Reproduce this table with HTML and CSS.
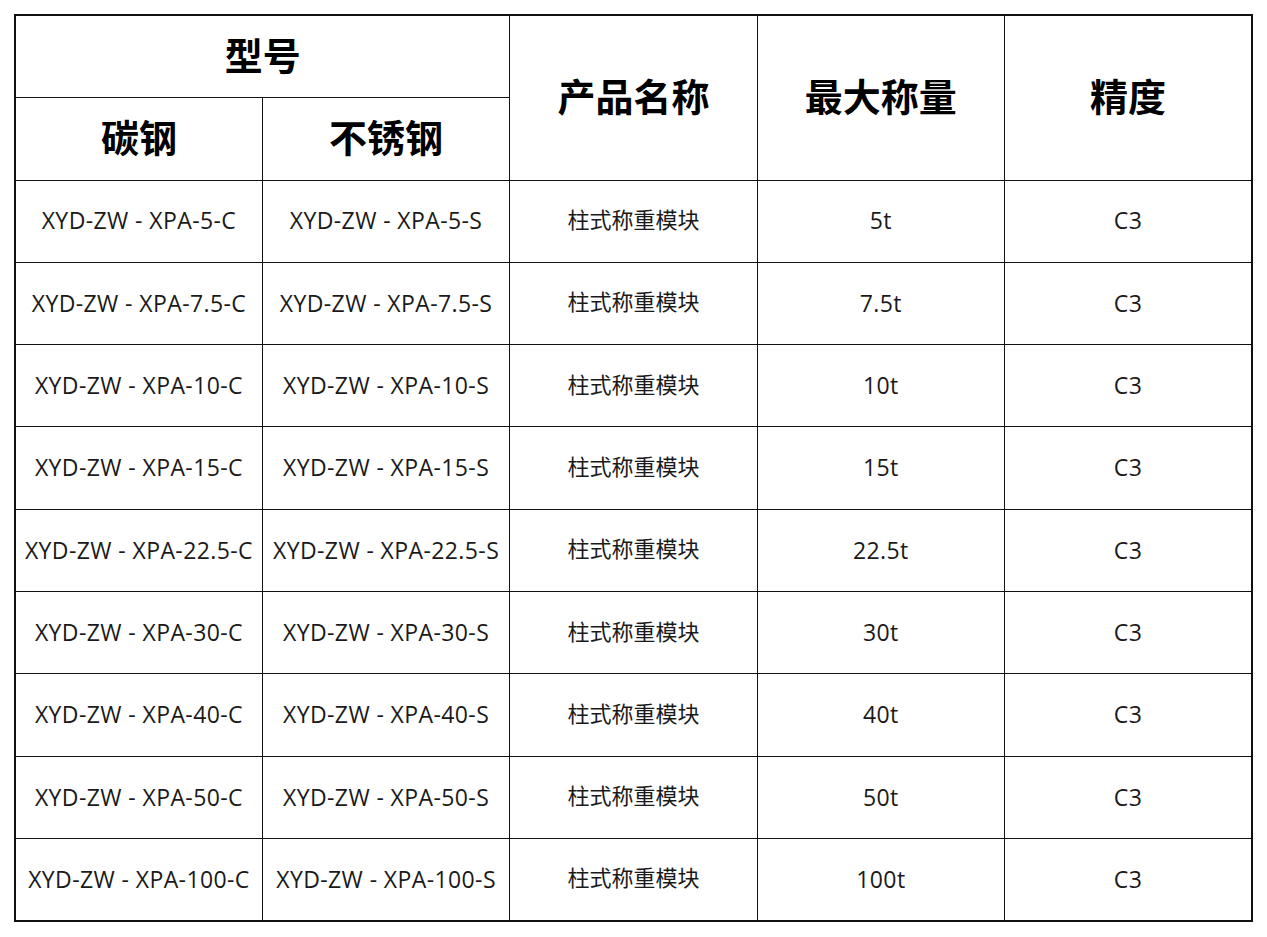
FILE: index.html
```html
<!DOCTYPE html>
<html lang="zh-CN">
<head>
<meta charset="utf-8">
<title>型号表</title>
<link rel="stylesheet" href="styles.css">
</head>
<body>
<table class="spec">
  <colgroup>
    <col class="c"><col class="c"><col class="c"><col class="c"><col class="c">
  </colgroup>
  <thead>
    <tr class="h1">
      <th colspan="2">型号</th>
      <th rowspan="2">产品名称</th>
      <th rowspan="2">最大称量</th>
      <th rowspan="2">精度</th>
    </tr>
    <tr class="h2">
      <th>碳钢</th>
      <th>不锈钢</th>
    </tr>
  </thead>
  <tbody>
    <tr><td>XYD-ZW - XPA-5-C</td><td>XYD-ZW - XPA-5-S</td><td class="cn">柱式称重模块</td><td>5t</td><td>C3</td></tr>
    <tr><td>XYD-ZW - XPA-7.5-C</td><td>XYD-ZW - XPA-7.5-S</td><td class="cn">柱式称重模块</td><td>7.5t</td><td>C3</td></tr>
    <tr><td>XYD-ZW - XPA-10-C</td><td>XYD-ZW - XPA-10-S</td><td class="cn">柱式称重模块</td><td>10t</td><td>C3</td></tr>
    <tr><td>XYD-ZW - XPA-15-C</td><td>XYD-ZW - XPA-15-S</td><td class="cn">柱式称重模块</td><td>15t</td><td>C3</td></tr>
    <tr><td>XYD-ZW - XPA-22.5-C</td><td>XYD-ZW - XPA-22.5-S</td><td class="cn">柱式称重模块</td><td>22.5t</td><td>C3</td></tr>
    <tr><td>XYD-ZW - XPA-30-C</td><td>XYD-ZW - XPA-30-S</td><td class="cn">柱式称重模块</td><td>30t</td><td>C3</td></tr>
    <tr><td>XYD-ZW - XPA-40-C</td><td>XYD-ZW - XPA-40-S</td><td class="cn">柱式称重模块</td><td>40t</td><td>C3</td></tr>
    <tr><td>XYD-ZW - XPA-50-C</td><td>XYD-ZW - XPA-50-S</td><td class="cn">柱式称重模块</td><td>50t</td><td>C3</td></tr>
    <tr><td>XYD-ZW - XPA-100-C</td><td>XYD-ZW - XPA-100-S</td><td class="cn">柱式称重模块</td><td>100t</td><td>C3</td></tr>
  </tbody>
</table>
</body>
</html>
```
FILE: styles.css
```css
html, body {
  margin: 0;
  padding: 0;
  background: #ffffff;
}
body {
  padding: 14px 0 0 14px;
  font-family: "Noto Sans CJK SC", "Noto Sans", sans-serif;
  color: #1a1a1a;
}
.spec {
  border-collapse: collapse;
  table-layout: fixed;
  width: 1239px;
  border: 2px solid #111;
}
.spec th,
.spec td {
  border: 1px solid #111;
  text-align: center;
  vertical-align: middle;
  padding: 0;
  white-space: nowrap;
}
.spec th {
  font-size: 38px;
  font-weight: 700;
  color: #000;
  height: 75.3px;
  padding-bottom: 6px;
  line-height: 1.2;
}
.spec td {
  font-family: "Open Sans", "Noto Sans CJK SC", sans-serif;
  font-size: 23px;
  letter-spacing: 0.4px;
  height: 81.3px;
  line-height: 1.2;
}
.spec td.cn {
  font-family: "Noto Sans CJK SC", sans-serif;
  font-size: 22px;
  letter-spacing: 0;
  height: 75.3px;
  padding-bottom: 6px;
}
```
